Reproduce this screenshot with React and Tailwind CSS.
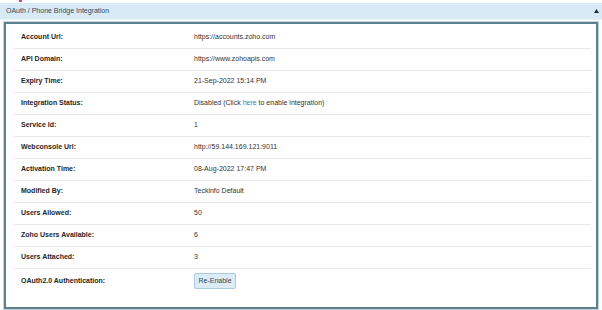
const rows = [
  { label: 'Account Url:', value: 'https://accounts.zoho.com' },
  { label: 'API Domain:', value: 'https://www.zohoapis.com' },
  { label: 'Expiry Time:', value: '21-Sep-2022 15:14 PM' },
  { label: 'Integration Status:', value: 'status' },
  { label: 'Service Id:', value: '1' },
  { label: 'Webconsole Url:', value: 'http://59.144.169.121:9011' },
  { label: 'Activation Time:', value: '08-Aug-2022 17:47 PM' },
  { label: 'Modified By:', value: 'Teckinfo Default' },
  { label: 'Users Allowed:', value: '50' },
  { label: 'Zoho Users Available:', value: '6' },
  { label: 'Users Attached:', value: '3' },
]

function Value({ value }) {
  if (value === 'status') {
    return (
      <span>
        Disabled (Click <span className="text-[#2f7fc1]">here</span> to enable integration)
      </span>
    )
  }
  return <span>{value}</span>
}

export default function App() {
  return (
    <div className="w-[602px] h-[310px] bg-white overflow-hidden font-['Liberation_Sans',Arial,sans-serif] text-[7px] text-[#333]">
      {/* clipped strip above the panel header */}
      <div className="h-[3px] relative">
        <div className="absolute left-[19px] top-0 w-[3px] h-[2px] bg-[#d43aa8]" />
      </div>

      {/* header bar */}
      <div className="h-[17px] bg-[#d8eaf5] border-b border-[#e6f1f8] flex items-center justify-between pl-[6px] pr-[3px]">
        <span className="text-[#2e4d63] text-[7px]">OAuth / Phone Bridge Integration</span>
        <svg width="5" height="4" viewBox="0 0 5 4">
          <polygon points="2.5,0 5,4 0,4" fill="#1f2f3a" />
        </svg>
      </div>

      {/* panel */}
      <div className="mt-[2px] mx-[4px] h-[287px] border-2 border-[#5d808f] shadow-[0_0_0_1px_#c3d4dc] bg-white pl-[8px] pr-[5px] pt-[3px]">
        {rows.map((r) => (
          <div key={r.label} className="h-[22px] flex items-center border-b border-[#e8e8e8]">
            <span className="w-[180px] pl-[7px] font-bold text-[#262626]">{r.label}</span>
            <Value value={r.value} />
          </div>
        ))}
        <div className="flex items-start pt-[5px]">
          <span className="w-[180px] pl-[7px] font-bold text-[#262626] pt-[2px]">OAuth2.0 Authentication:</span>
          <button
            type="button"
            className="mt-[-1px] w-[42px] h-[16px] rounded-[2px] bg-[#dcecf6] border border-[#a9cbe0] text-[#2c4a5e] text-[7px] flex items-center justify-center"
          >
            Re-Enable
          </button>
        </div>
      </div>
    </div>
  )
}
